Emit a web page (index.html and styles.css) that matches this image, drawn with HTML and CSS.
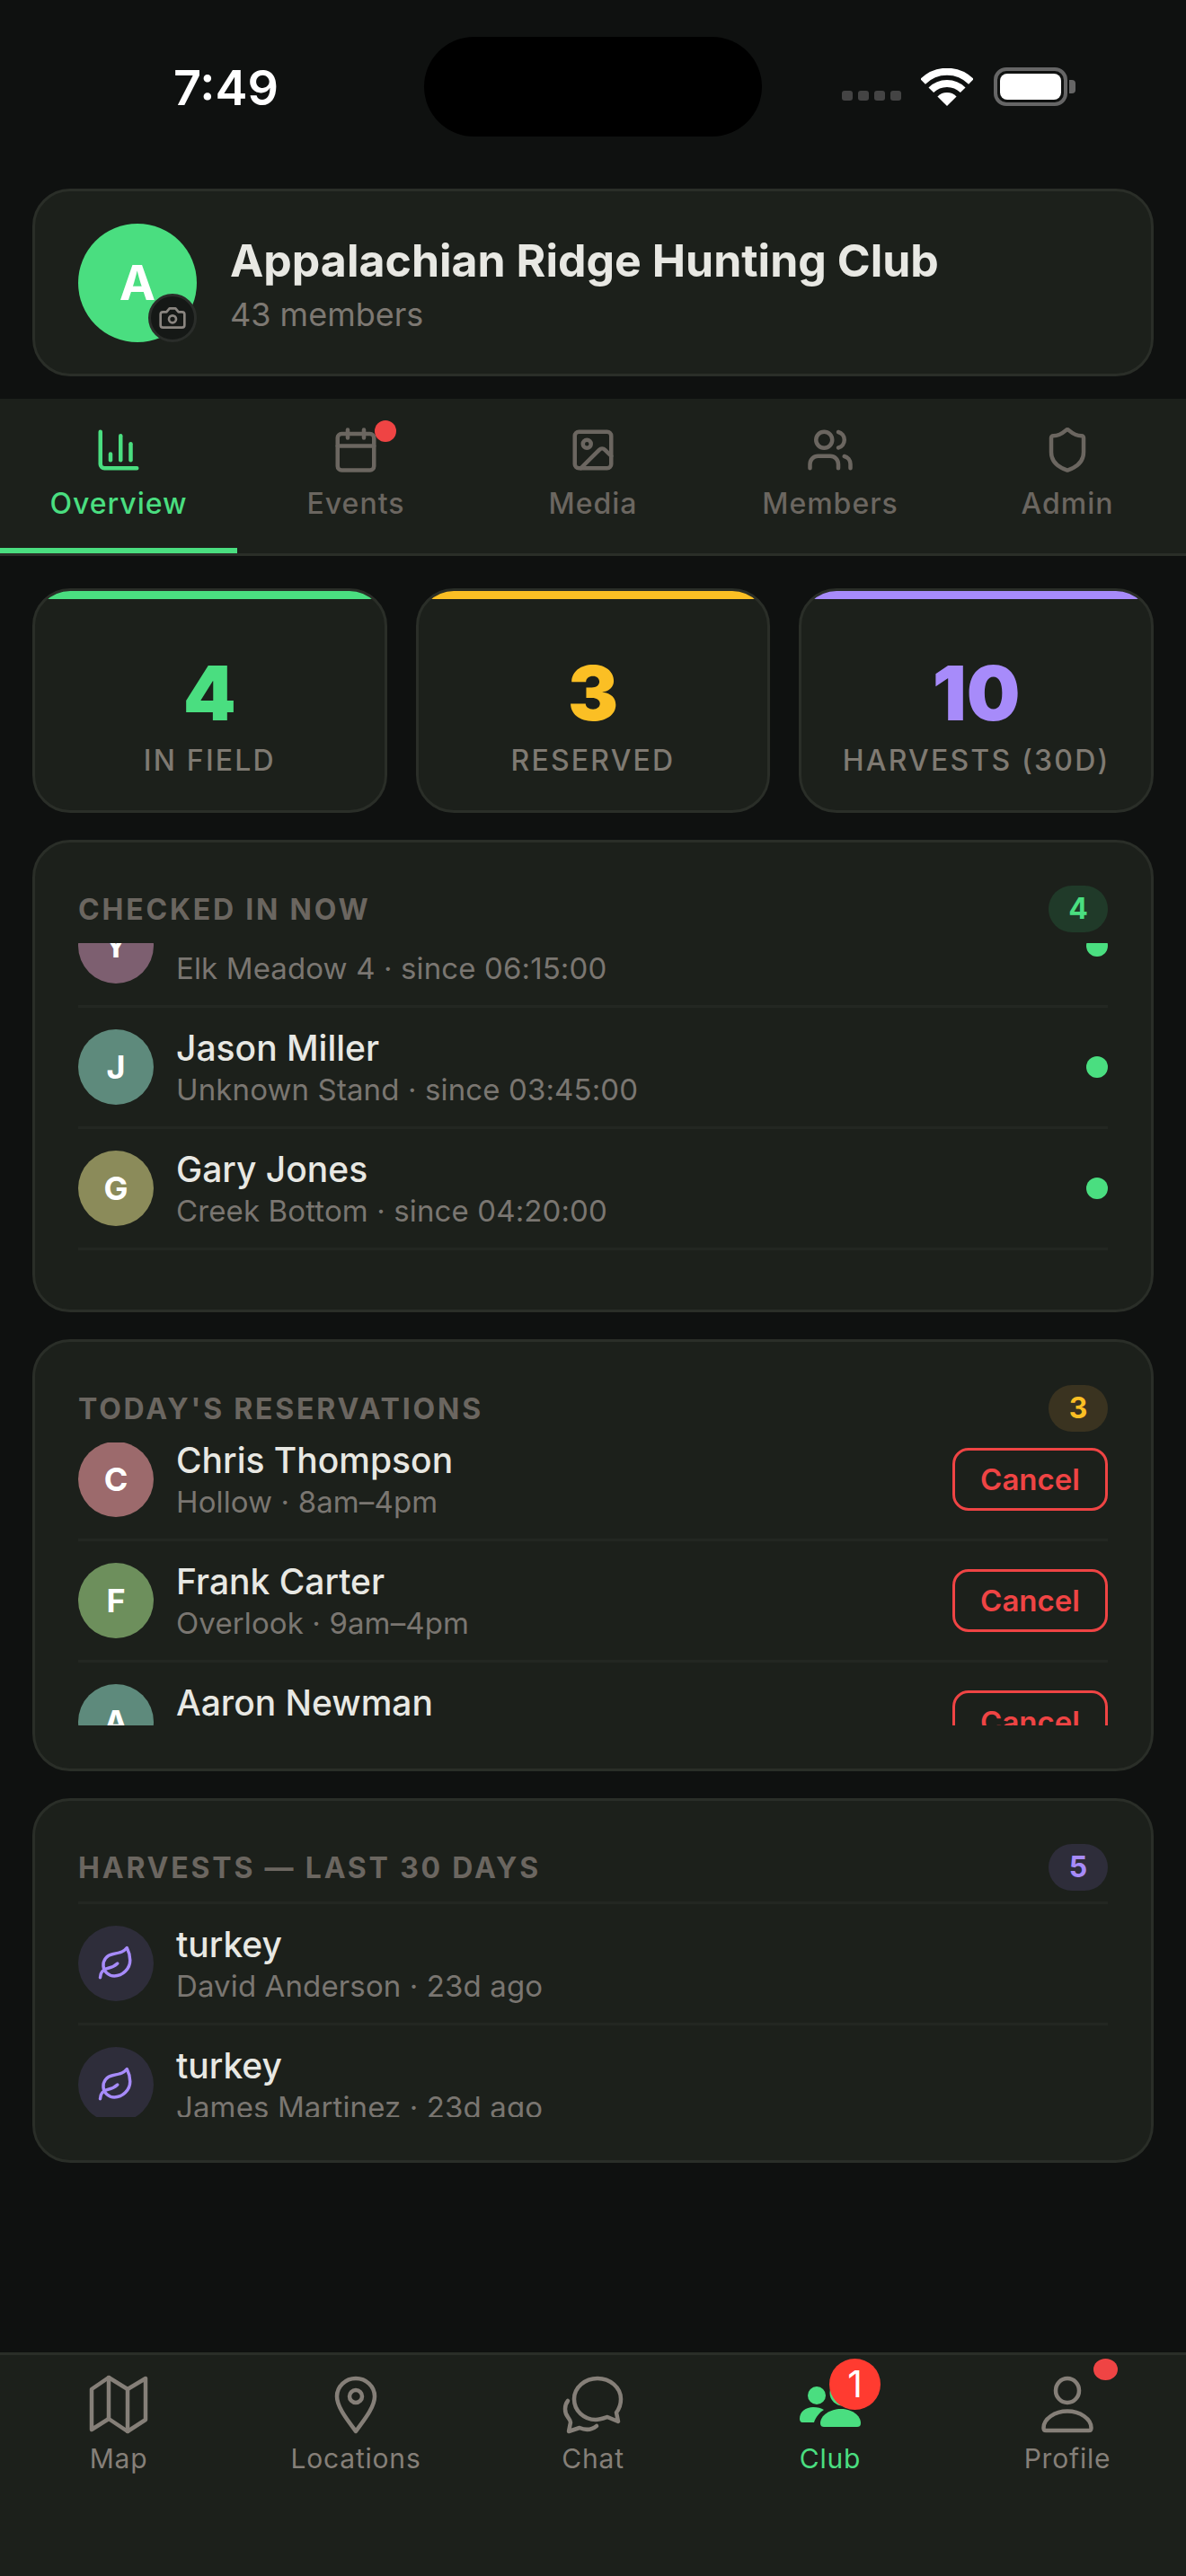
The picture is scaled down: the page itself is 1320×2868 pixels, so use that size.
FILE: index.html
```html
<!DOCTYPE html>
<html>
<head lang="en">
    <meta charset="UTF-8">
    <title>Club</title>
    <link rel="stylesheet" href="styles.css">
</head>
<body>
<div class="status">
    <div class="time">7:49</div>
    <div class="island"></div>
    <div class="status-icons">
        <div class="signal"><span></span><span></span><span></span><span></span></div>
        <svg class="wifi" viewBox="0 0 58 42" width="58" height="42">
            <path d="M2.1 14.9a38 38 0 0 1 53.8 0" fill="none" stroke="#fff" stroke-width="8"/>
            <path d="M11.3 24.3a25 25 0 0 1 35.4 0" fill="none" stroke="#fff" stroke-width="8"/>
            <path d="M29 42L18.4 31.4a15 15 0 0 1 21.2 0z" fill="#fff"/>
        </svg>
        <div class="battery"><div class="battery-fill"></div></div>
        <div class="battery-nub"></div>
    </div>
</div>

<div class="main">
    <div class="club-card">
        <div class="club-avatar">A
            <div class="camera">
                <svg class="icon" viewBox="0 0 24 24" width="32" height="32"><path d="M14.5 4h-5L7 7H4a2 2 0 0 0-2 2v9a2 2 0 0 0 2 2h16a2 2 0 0 0 2-2V9a2 2 0 0 0-2-2h-3l-2.5-3z"/><circle cx="12" cy="13" r="3"/></svg>
            </div>
        </div>
        <div class="club-info">
            <div class="club-name">Appalachian Ridge Hunting Club</div>
            <div class="club-sub">43 members</div>
        </div>
    </div>
</div>

<div class="tabs">
    <div class="tab active">
        <div class="tab-icon"><svg class="icon" viewBox="0 0 24 24" width="54" height="54"><path d="M3 3v16a2 2 0 0 0 2 2h16"/><path d="M18 17V9"/><path d="M13 17V5"/><path d="M8 17v-3"/></svg></div>
        <div class="tab-label">Overview</div>
    </div>
    <div class="tab">
        <div class="tab-icon">
            <svg class="icon" viewBox="0 0 24 24" width="54" height="54"><path d="M8 2v4"/><path d="M16 2v4"/><rect x="3" y="4" width="18" height="18" rx="2"/><path d="M3 10h18"/></svg>
            <span class="tab-dot"></span>
        </div>
        <div class="tab-label">Events</div>
    </div>
    <div class="tab">
        <div class="tab-icon"><svg class="icon" viewBox="0 0 24 24" width="54" height="54"><rect x="3" y="3" width="18" height="18" rx="2"/><circle cx="9" cy="9" r="2"/><path d="m21 15-3.086-3.086a2 2 0 0 0-2.828 0L6 21"/></svg></div>
        <div class="tab-label">Media</div>
    </div>
    <div class="tab">
        <div class="tab-icon"><svg class="icon" viewBox="0 0 24 24" width="54" height="54"><path d="M16 21v-2a4 4 0 0 0-4-4H6a4 4 0 0 0-4 4v2"/><circle cx="9" cy="7" r="4"/><path d="M22 21v-2a4 4 0 0 0-3-3.87"/><path d="M16 3.13a4 4 0 0 1 0 7.75"/></svg></div>
        <div class="tab-label">Members</div>
    </div>
    <div class="tab">
        <div class="tab-icon"><svg class="icon" viewBox="0 0 24 24" width="54" height="54"><path d="M20 13c0 5-3.5 7.5-7.66 8.95a1 1 0 0 1-.67-.01C7.5 20.5 4 18 4 13V6a1 1 0 0 1 1-1c2 0 4.5-1.2 6.24-2.72a1.17 1.17 0 0 1 1.52 0C14.51 3.81 17 5 19 5a1 1 0 0 1 1 1z"/></svg></div>
        <div class="tab-label">Admin</div>
    </div>
</div>

<div class="main content">
    <div class="stats">
        <div class="stat">
            <div class="stat-bar green-bg"></div>
            <div class="stat-num green">4</div>
            <div class="stat-label">IN FIELD</div>
        </div>
        <div class="stat">
            <div class="stat-bar amber-bg"></div>
            <div class="stat-num amber">3</div>
            <div class="stat-label">RESERVED</div>
        </div>
        <div class="stat">
            <div class="stat-bar purple-bg"></div>
            <div class="stat-num purple">10</div>
            <div class="stat-label">HARVESTS (30D)</div>
        </div>
    </div>

    <div class="section">
        <div class="section-head">
            <div class="section-title">CHECKED IN NOW</div>
            <div class="count count-green">4</div>
        </div>
        <div class="list list-checked">
            <div class="row">
                <div class="avatar" style="background:#7d5f70">Y</div>
                <div class="row-text">
                    <div class="row-name">Yates Hall</div>
                    <div class="row-sub">Elk Meadow 4 · since 06:15:00</div>
                </div>
                <div class="live-dot"></div>
            </div>
            <div class="row">
                <div class="avatar" style="background:#5e8a7c">J</div>
                <div class="row-text">
                    <div class="row-name">Jason Miller</div>
                    <div class="row-sub">Unknown Stand · since 03:45:00</div>
                </div>
                <div class="live-dot"></div>
            </div>
            <div class="row">
                <div class="avatar" style="background:#8b8b5a">G</div>
                <div class="row-text">
                    <div class="row-name">Gary Jones</div>
                    <div class="row-sub">Creek Bottom · since 04:20:00</div>
                </div>
                <div class="live-dot"></div>
            </div>
        </div>
    </div>

    <div class="section">
        <div class="section-head">
            <div class="section-title">TODAY'S RESERVATIONS</div>
            <div class="count count-amber">3</div>
        </div>
        <div class="list list-reserved">
            <div class="row">
                <div class="avatar" style="background:#9c6a6c">C</div>
                <div class="row-text">
                    <div class="row-name">Chris Thompson</div>
                    <div class="row-sub">Hollow · 8am–4pm</div>
                </div>
                <div class="cancel">Cancel</div>
            </div>
            <div class="row">
                <div class="avatar" style="background:#6d8f5c">F</div>
                <div class="row-text">
                    <div class="row-name">Frank Carter</div>
                    <div class="row-sub">Overlook · 9am–4pm</div>
                </div>
                <div class="cancel">Cancel</div>
            </div>
            <div class="row">
                <div class="avatar" style="background:#5e8a7c">A</div>
                <div class="row-text">
                    <div class="row-name">Aaron Newman</div>
                    <div class="row-sub">Ridge · 9am–4pm</div>
                </div>
                <div class="cancel">Cancel</div>
            </div>
        </div>
    </div>

    <div class="section">
        <div class="section-head">
            <div class="section-title">HARVESTS — LAST 30 DAYS</div>
            <div class="count count-purple">5</div>
        </div>
        <div class="list list-harvests">
            <div class="row">
                <div class="avatar leaf-avatar"><svg class="icon" viewBox="0 0 24 24" width="42" height="42"><path d="M11 20A7 7 0 0 1 9.8 6.1C15.5 5 17 4.48 19 2c1 2 2 4.18 2 8 0 5.5-4.78 10-10 10Z"/><path d="M2 21c0-3 1.85-5.36 5.08-6C9.5 14.52 12 13 13 12"/></svg></div>
                <div class="row-text">
                    <div class="row-name">turkey</div>
                    <div class="row-sub">David Anderson · 23d ago</div>
                </div>
            </div>
            <div class="row">
                <div class="avatar leaf-avatar"><svg class="icon" viewBox="0 0 24 24" width="42" height="42"><path d="M11 20A7 7 0 0 1 9.8 6.1C15.5 5 17 4.48 19 2c1 2 2 4.18 2 8 0 5.5-4.78 10-10 10Z"/><path d="M2 21c0-3 1.85-5.36 5.08-6C9.5 14.52 12 13 13 12"/></svg></div>
                <div class="row-text">
                    <div class="row-name">turkey</div>
                    <div class="row-sub">James Martinez · 23d ago</div>
                </div>
            </div>
        </div>
    </div>
</div>

<div class="nav">
    <div class="nav-item">
        <div class="nav-icon"><svg class="icon thin" viewBox="0 0 72 72" width="72" height="72"><path d="M6 19L25 6L46 19L66 7V53L46 66L25 52L6 64Z"/><path d="M25 6V52"/><path d="M46 19V66"/></svg></div>
        <div class="nav-label">Map</div>
    </div>
    <div class="nav-item">
        <div class="nav-icon"><svg class="icon thin" viewBox="0 0 72 72" width="72" height="72"><path d="M36 7C24.5 7 15 16 15 27C15 40 29 56 36 66C43 56 57 40 57 27C57 16 47.5 7 36 7Z"/><circle cx="36" cy="27" r="7"/></svg></div>
        <div class="nav-label">Locations</div>
    </div>
    <div class="nav-item">
        <div class="nav-icon"><svg class="icon thin" viewBox="0 0 72 72" width="72" height="72"><path d="M41 7C27 7 15 17 15 30C15 43 26 53 39 53C44 53 49 51 52 50L64 55L62 45C65 41 67 36 67 30C67 17 55 7 41 7Z"/><path d="M8 32C4 37 4 45 8 50C10 53 11 54 11 56L9 66L21 62C28 65 35 64 40 60"/></svg></div>
        <div class="nav-label">Chat</div>
    </div>
    <div class="nav-item active">
        <div class="nav-icon">
            <svg viewBox="0 0 72 72" width="72" height="72" fill="#4ade80"><circle cx="21" cy="26" r="10"/><circle cx="50" cy="23" r="14.5"/><path d="M2 52C2 44 9 39 17 39C22 39 26 40 29 42C24 45 20 50 18 56H5C3 56 2 54 2 52Z"/><path d="M25 57C25 48 36 41 48 41C60 41 70 48 70 57C70 60 68 61 66 61H29C27 61 25 60 25 57Z"/></svg>
            <span class="nav-badge">1</span>
        </div>
        <div class="nav-label">Club</div>
    </div>
    <div class="nav-item">
        <div class="nav-icon">
            <svg class="icon thin" viewBox="0 0 72 72" width="72" height="72"><ellipse cx="36" cy="20.5" rx="13" ry="13.5"/><path d="M36 43.5C22 43.5 9.5 52 9.5 62Q9.5 65 12 65H60Q62.5 65 62.5 62C62.5 52 50 43.5 36 43.5Z"/></svg>
            <span class="nav-dot"></span>
        </div>
        <div class="nav-label">Profile</div>
    </div>
</div>
</body>
</html>
```

FILE: styles.css
```css
* {
    margin: 0;
    padding: 0;
    box-sizing: border-box;
}
body {
    width: 1320px;
    height: 2868px;
    background: #0f1110;
    font-family: Inter, "Noto Sans", sans-serif;
    color: #e8e8e3;
    display: flex;
    flex-direction: column;
    overflow: hidden;
}

/* status bar */
.status {
    display: grid;
    grid-template-columns: 472px 376px 1fr;
    align-items: center;
    height: 111px;
    margin-top: 41px;
    margin-bottom: 58px;
}
.time {
    padding: 2px 0 0 193px;
    font-size: 54px;
    font-weight: 600;
    color: #fff;
}
.island {
    height: 111px;
    background: #000;
    border-radius: 56px;
}
.status-icons {
    display: flex;
    align-items: center;
    padding-left: 89px;
}
.signal {
    display: flex;
    gap: 6px;
    margin-top: 20px;
    margin-right: 22px;
}
.signal span {
    width: 12px;
    height: 11px;
    background: #444;
    border-radius: 3px;
}
.wifi {
    margin-right: 23px;
}
.battery {
    width: 82px;
    height: 43px;
    border: 4px solid #666;
    border-radius: 14px;
    padding: 3px;
}
.battery-fill {
    height: 100%;
    background: #fff;
    border-radius: 8px;
}
.battery-nub {
    width: 7px;
    height: 15px;
    margin-left: 2px;
    background: #666;
    border-radius: 0 4px 4px 0;
}

.main {
    padding: 0 36px;
}
.icon {
    fill: none;
    stroke: currentColor;
    stroke-width: 2;
    stroke-linecap: round;
    stroke-linejoin: round;
    display: block;
}
.icon.thin {
    stroke-width: 4.5;
}

/* club header */
.club-card {
    display: flex;
    align-items: center;
    gap: 37px;
    height: 209px;
    padding: 0 48px;
    background: #1c201b;
    border: 3px solid #2a2e28;
    border-radius: 42px;
}
.club-avatar {
    position: relative;
    width: 132px;
    height: 132px;
    border-radius: 50%;
    background: #4ade80;
    color: #fff;
    font-size: 54px;
    font-weight: 700;
    display: flex;
    align-items: center;
    justify-content: center;
}
.camera {
    position: absolute;
    right: 0;
    bottom: 0;
    width: 54px;
    height: 54px;
    border-radius: 50%;
    background: #151816;
    border: 3px solid #2a2d2a;
    color: #8a8580;
    display: flex;
    align-items: center;
    justify-content: center;
}
.club-info {
    padding-top: 4px;
}
.club-name {
    font-size: 50px;
    font-weight: 700;
    line-height: 58px;
    color: #e8e8e3;
}
.club-sub {
    margin-top: 9px;
    font-size: 36px;
    line-height: 44px;
    color: #7d7872;
}

/* tabs */
.tabs {
    display: flex;
    margin-top: 25px;
    background: #1c201b;
    border-bottom: 3px solid #2a2e28;
}
.tab {
    flex: 1;
    height: 172px;
    padding-top: 30px;
    border-bottom: 6px solid transparent;
    color: #6b6660;
    display: flex;
    flex-direction: column;
    align-items: center;
}
.tab.active {
    color: #4ade80;
    border-bottom-color: #4ade80;
}
.tab-icon {
    position: relative;
    width: 54px;
    height: 54px;
}
.tab-dot {
    position: absolute;
    left: 48px;
    top: -6px;
    width: 24px;
    height: 24px;
    border-radius: 50%;
    background: #ef4444;
}
.tab-label {
    margin-top: 13px;
    font-size: 32px;
    font-weight: 500;
    line-height: 40px;
    letter-spacing: 1px;
}

.content {
    display: flex;
    flex-direction: column;
    gap: 30px;
    margin-top: 36px;
}

/* stats */
.stats {
    display: grid;
    grid-template-columns: repeat(3, 1fr);
    gap: 32px;
}
.stat {
    height: 250px;
    background: #1c201b;
    border: 3px solid #2a2e28;
    border-radius: 42px;
    overflow: hidden;
    text-align: center;
}
.stat-bar {
    height: 9px;
}
.stat-num {
    margin-top: 63px;
    font-size: 84px;
    font-weight: 900;
    line-height: 84px;
}
.stat-label {
    margin-top: 13px;
    font-size: 32px;
    font-weight: 500;
    line-height: 40px;
    letter-spacing: 2.2px;
    color: #7f7a72;
}
.green { color: #4ade80; }
.amber { color: #fbbf24; }
.purple { color: #a78bfa; }
.green-bg { background: #4ade80; }
.amber-bg { background: #fbbf24; }
.purple-bg { background: #a78bfa; }

/* sections */
.section {
    padding: 48px;
    background: #1c201b;
    border: 3px solid #2a2e28;
    border-radius: 42px;
}
.section-head {
    display: flex;
    align-items: center;
    justify-content: space-between;
    height: 52px;
    margin-bottom: 12px;
}
.section-title {
    font-size: 32px;
    font-weight: 700;
    letter-spacing: 2.8px;
    color: #6b6660;
}
.count {
    width: 66px;
    height: 52px;
    border-radius: 26px;
    font-size: 32px;
    font-weight: 700;
    line-height: 52px;
    text-align: center;
}
.count-green { background: #203a29; color: #4ade80; }
.count-amber { background: #3a3320; color: #fbbf24; }
.count-purple { background: #2e2d3a; color: #a78bfa; }

.list {
    overflow: hidden;
}
.list-checked { height: 360px; }
.list-checked .row:first-child { margin-top: -63px; }
.list-reserved { height: 315px; }
.list-reserved .row:first-child { margin-top: -25px; }
.list-harvests { height: 240px; }
.list-harvests .row:first-child { border-top: 3px solid #232722; }

.row {
    display: flex;
    align-items: center;
    gap: 25px;
    padding: 24px 0;
    border-bottom: 3px solid #232722;
}
.avatar {
    flex: none;
    width: 84px;
    height: 84px;
    border-radius: 50%;
    color: #fff;
    font-size: 36px;
    font-weight: 700;
    display: flex;
    align-items: center;
    justify-content: center;
}
.leaf-avatar {
    background: #2e2d3a;
    color: #a78bfa;
}
.row-text {
    flex: 1;
    margin: -3px 0;
}
.row-name {
    font-size: 39px;
    font-weight: 500;
    line-height: 46px;
    color: #e8e8e3;
}
.row-sub {
    margin-top: 3px;
    font-size: 33px;
    line-height: 40px;
    letter-spacing: 0.12px;
    color: #7a7671;
}
.live-dot {
    width: 24px;
    height: 24px;
    border-radius: 50%;
    background: #4ade80;
}
.cancel {
    width: 173px;
    height: 70px;
    border: 3px solid #ef4444;
    border-radius: 18px;
    color: #ef4444;
    font-size: 33px;
    font-weight: 600;
    line-height: 64px;
    text-align: center;
}

/* bottom nav */
.nav {
    display: flex;
    margin-top: auto;
    height: 249px;
    padding-top: 19px;
    background: #1c201b;
    border-top: 3px solid #2a2e28;
}
.nav-item {
    flex: 1;
    color: #857f78;
    display: flex;
    flex-direction: column;
    align-items: center;
}
.nav-item.active {
    color: #4ade80;
}
.nav-icon {
    position: relative;
    width: 72px;
    height: 72px;
}
.nav-badge {
    position: absolute;
    left: 35px;
    top: -15px;
    width: 57px;
    height: 57px;
    border-radius: 50%;
    background: #ff3b30;
    color: #fff;
    font-size: 41px;
    line-height: 57px;
    text-align: center;
}
.nav-dot {
    position: absolute;
    left: 65px;
    top: -15px;
    width: 27px;
    height: 24px;
    border-radius: 50%;
    background: #ef4444;
}
.nav-label {
    margin-top: 6px;
    font-size: 30px;
    line-height: 36px;
    letter-spacing: 0.8px;
}
```
